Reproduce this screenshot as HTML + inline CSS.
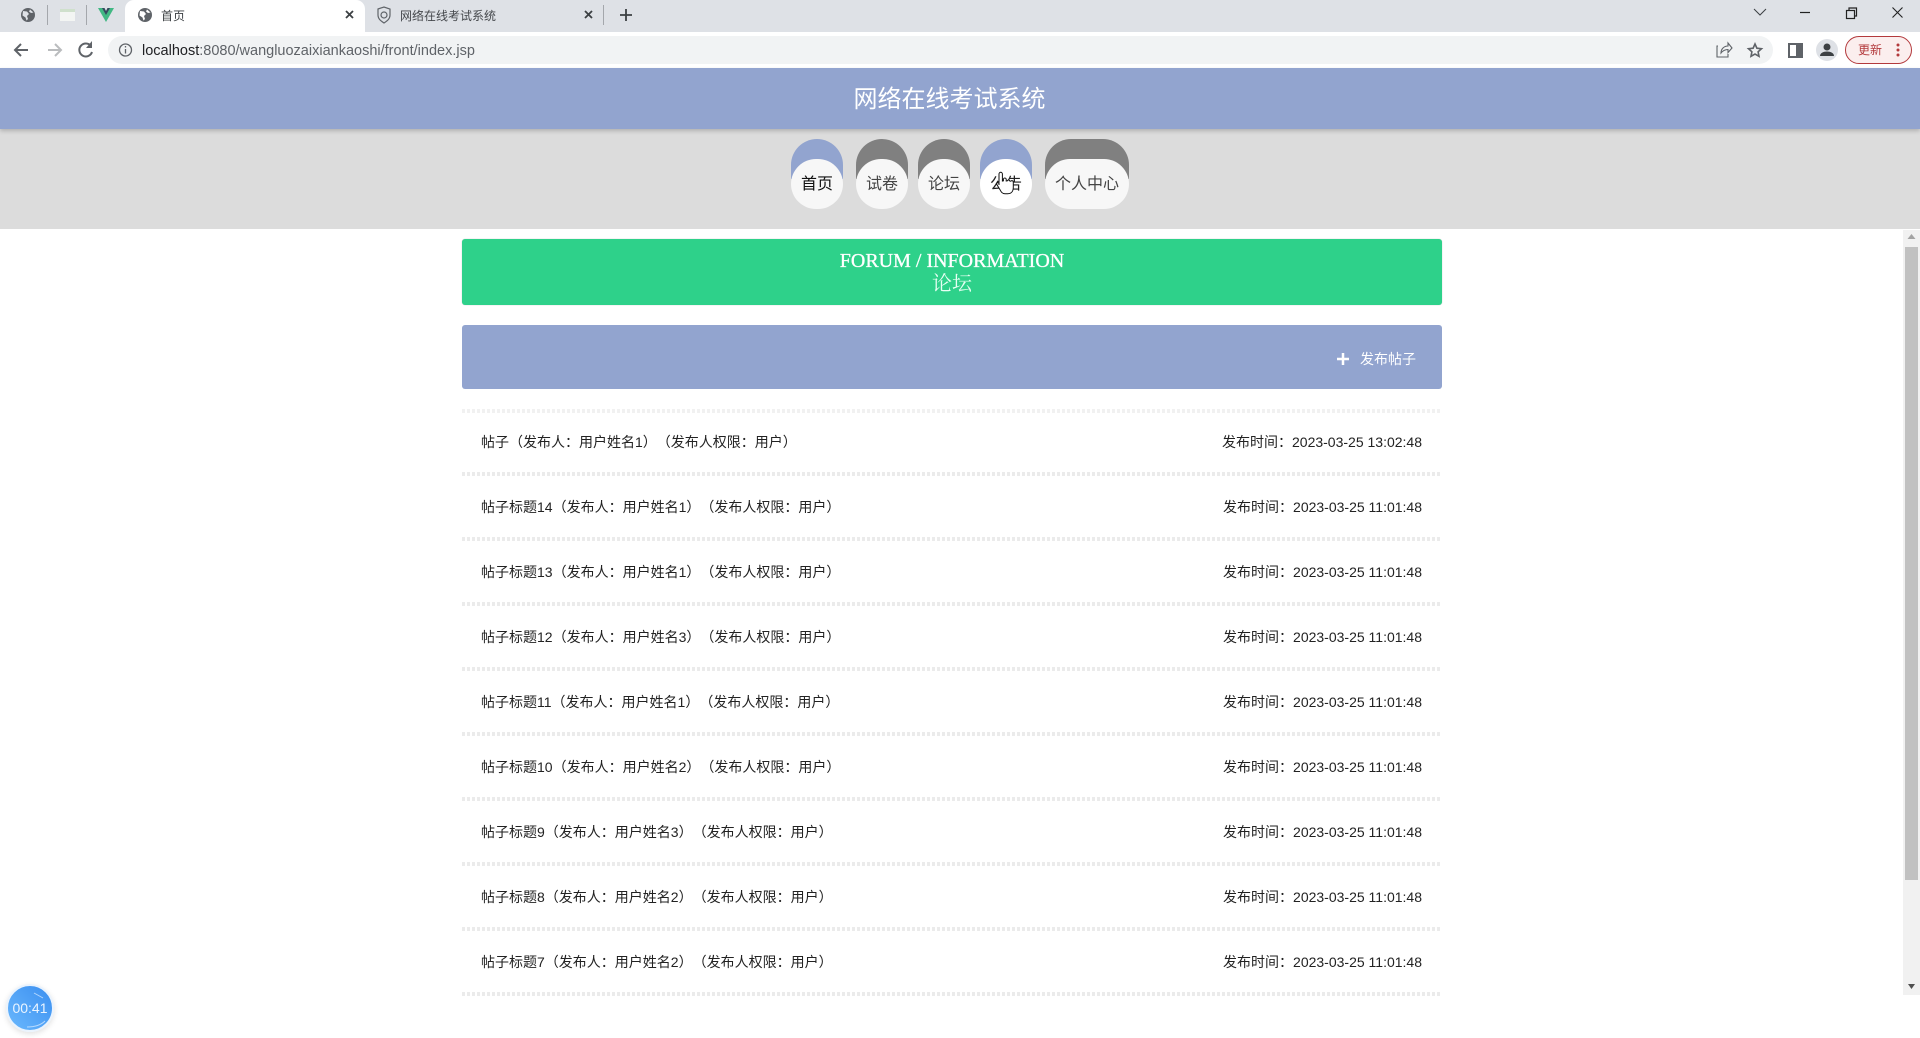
<!DOCTYPE html>
<html lang="zh"><head><meta charset="utf-8"><title>首页</title>
<style>
html,body{margin:0;padding:0;width:1920px;height:1038px;overflow:hidden;background:#fff;font-family:"Liberation Sans","Noto Sans CJK SC",sans-serif;color:#202124;text-spacing-trim:space-all}
.a{position:absolute;white-space:nowrap}
svg{position:absolute;overflow:visible}
.nt{position:absolute;top:139px;height:40px;border-radius:26px 26px 0 0}
.nb{position:absolute;top:159px;height:50px;border-radius:25px;background:#f7f7f7;text-align:center;line-height:52px;font-size:16px;color:#444}
.dash{position:absolute;left:462px;width:980px;height:4px;background:repeating-linear-gradient(90deg,#ebebeb 0 3px,#fff 3px 5px)}
.l,.r{position:absolute;font-size:14px;line-height:20px;color:#222;white-space:nowrap}
.l{left:481px}.r{right:498px}
</style></head><body>
<!-- tab strip -->
<div class="a" style="left:0;top:0;width:1920px;height:32px;background:#dee1e6"></div>
<div class="a" style="left:125px;top:0;width:240px;height:32px;background:#fff;border-radius:9px 9px 0 0"></div>
<svg style="left:0;top:0" width="700" height="32">
<circle cx="28" cy="15" r="7" fill="#5f6368"/><path d="M23 11l4 .5 2 2.500-2 2 1 3-1.500 1.500-1-3-3-2zM30 9.500l-1 2 2 1.500 2.500-.5" fill="#dee1e6"/>
<path d="M47.5 5v20M86.5 5v20M603.500 5v20" stroke="#a4a7ac" stroke-width="1"/>
<rect x="60" y="9" width="15" height="12" fill="#f3f5f3"/><rect x="60" y="9" width="15" height="3" fill="#cfe0cc"/>
<path d="M98 8h5l3 6 3-6h5l-8 14z" fill="#41b883"/><path d="M102 8h2.500l1.500 3 1.500-3h2.500l-4 7z" fill="#35495e"/>
<circle cx="145" cy="15" r="7" fill="#5f6368"/><path d="M140 11l4 .5 2 2.500-2 2 1 3-1.500 1.500-1-3-3-2zM147 9.500l-1 2 2 1.500 2.500-.5" fill="#fff"/>
<path d="M346 11l7 7M353 11l-7 7M585 11l7 7M592 11l-7 7" stroke="#3c4043" stroke-width="1.800"/>
<path d="M378 9l6-2 6 2v6c0 4-3 6-6 8-3-2-6-4-6-8z" fill="none" stroke="#5f6368" stroke-width="1.200"/><circle cx="384" cy="15" r="3" fill="none" stroke="#5f6368" stroke-width="1.200"/>
<path d="M626 9v12M620 15h12" stroke="#3c4043" stroke-width="1.800"/>
</svg>
<div class="a" style="left:161px;top:7px;font-size:12px;line-height:18px;color:#3c4043">首页</div>
<div class="a" style="left:400px;top:7px;font-size:12px;line-height:18px;color:#45484c">网络在线考试系统</div>
<svg style="left:1600px;top:0" width="320" height="32">
<path d="M154 9l6 6 6-6" fill="none" stroke="#3c4043" stroke-width="1"/>
<path d="M200 12.500h10" stroke="#222" stroke-width="1.200"/>
<rect x="246.500" y="10.500" width="8" height="8" fill="none" stroke="#222" stroke-width="1.200"/><path d="M249 10V8h7.500v8h-2" fill="none" stroke="#222" stroke-width="1.200"/>
<path d="M292.500 7.500l10 10M302.500 7.500l-10 10" stroke="#222" stroke-width="1.100"/>
</svg>
<!-- toolbar -->
<div class="a" style="left:0;top:32px;width:1920px;height:36px;background:#fff"></div>
<div class="a" style="left:108px;top:36px;width:1665px;height:28px;border-radius:14px;background:#f1f3f4"></div>
<svg style="left:0;top:32px" width="200" height="36">
<path d="M28 18H16M21 12l-6 6 6 6" fill="none" stroke="#5f6368" stroke-width="2"/>
<path d="M48 18h12M55 12l6 6-6 6" fill="none" stroke="#babcbe" stroke-width="2"/>
<path d="M91 14a6.500 6.500 0 1 0 1 6" fill="none" stroke="#5f6368" stroke-width="2"/><path d="M92 9v7h-6z" fill="#5f6368"/>
<circle cx="125.500" cy="18" r="6" fill="none" stroke="#5f6368" stroke-width="1.300"/><path d="M125.500 17v4.500M125.500 14v1.500" stroke="#5f6368" stroke-width="1.300"/>
</svg>
<div class="a" style="left:142px;top:41px;font-size:14.500px;line-height:20px;color:#5f6368"><span style="color:#202124">localhost</span>:8080/wangluozaixiankaoshi/front/index.jsp</div>
<svg style="left:1600px;top:32px" width="320" height="36">
<path d="M118 14h-1v11h11v-3" fill="none" stroke="#5f6368" stroke-width="1.100"/><path d="M121 21c0-4 3-7 7-7v-3l4 5-4 4.500v-3c-3 0-5 1-7 3.500z" fill="none" stroke="#5f6368" stroke-width="1.100"/>
<path d="M155 12l1.900 4.200 4.600.5-3.400 3.100.9 4.500-4-2.300-4 2.300.9-4.500-3.400-3.100 4.600-.5z" fill="none" stroke="#5f6368" stroke-width="1.600"/>
<rect x="189" y="12" width="13" height="13" fill="#fff" stroke="#5f6368" stroke-width="2"/><rect x="196" y="12" width="7" height="14" fill="#5f6368"/>
<circle cx="227" cy="18" r="11" fill="#dee1e6"/><circle cx="227" cy="15" r="3.500" fill="#3c4043"/><path d="M220 24c0-6 14-6 14 0z" fill="#3c4043"/>
<rect x="245.500" y="4.500" width="66" height="27" rx="13.500" fill="#fbeeee" stroke="#b3393c" stroke-width="1"/>
<circle cx="298" cy="13" r="1.500" fill="#b3393c"/><circle cx="298" cy="18" r="1.500" fill="#b3393c"/><circle cx="298" cy="23" r="1.500" fill="#b3393c"/>
</svg>
<div class="a" style="left:1858px;top:41px;font-size:12px;line-height:18px;color:#b3393c">更新</div>
<!-- header -->
<div class="a" style="left:0;top:68px;width:1920px;height:61px;background:#92a4cf;box-shadow:0 2px 4px rgba(0,0,0,.2);z-index:2"></div>
<div class="a" style="left:0;top:68px;width:1899px;z-index:3;text-align:center;line-height:63px;font-size:24px;color:#fff">网络在线考试系统</div>
<div class="a" style="left:0;top:129px;width:1920px;height:100px;background:#dcdcdc"></div>
<div class="nt" style="left:791px;width:52px;background:#92a4cf"></div><div class="nb" style="left:791px;width:52px;color:#111">首页</div>
<div class="nt" style="left:856px;width:52px;background:#808080"></div><div class="nb" style="left:856px;width:52px">试卷</div>
<div class="nt" style="left:918px;width:52px;background:#808080"></div><div class="nb" style="left:918px;width:52px">论坛</div>
<div class="nt" style="left:980px;width:52px;background:#92a4cf"></div><div class="nb" style="left:980px;width:52px;background:#fff;color:#222">公告</div>
<div class="nt" style="left:1045px;width:84px;background:#808080"></div><div class="nb" style="left:1045px;width:84px">个人中心</div>
<svg style="left:995px;top:170px" width="20" height="26"><path d="M4 15V4a1.700 1.700 0 0 1 3.400 0v7l1-.2V9a1.500 1.500 0 0 1 2.800 0v2l1-.1a1.400 1.400 0 0 1 2.700.2l.900.1a1.400 1.400 0 0 1 2.500 1v5c0 4-2 6.500-5.500 6.500H10c-3 0-4-2-5-4l-3-5c-1-2 1-3 2-1z" fill="#fff" stroke="#111" stroke-width="1"/></svg>
<!-- banner -->
<div class="a" style="left:462px;top:239px;width:980px;height:66px;background:#2ed18a;border-radius:3px;box-shadow:0 0 1px #bbb"></div>
<div class="a" style="left:462px;top:250px;width:980px;text-align:center;font-family:'Liberation Serif','Noto Serif CJK SC',serif;font-size:20px;line-height:22px;color:#fff;-webkit-text-stroke:.3px #fff">FORUM / INFORMATION</div>
<div class="a" style="left:462px;top:273px;width:980px;text-align:center;font-family:'Liberation Serif','Noto Serif CJK SC',serif;font-size:20px;line-height:22px;color:#e8fff4">论坛</div>
<div class="a" style="left:462px;top:325px;width:980px;height:64px;background:#92a4cf;border-radius:3px"></div>
<svg style="left:1336px;top:352px" width="14" height="14"><path d="M7 1v12M1 7h12" stroke="#fff" stroke-width="2.500"/></svg>
<div class="a" style="left:1360px;top:349px;font-size:14px;line-height:20px;color:#fff">发布帖子</div>
<!-- list -->
<div class="dash" style="top:409px;opacity:.7"></div><div class="dash" style="top:472px"></div><div class="dash" style="top:537px"></div><div class="dash" style="top:602px"></div><div class="dash" style="top:667px"></div><div class="dash" style="top:732px"></div><div class="dash" style="top:797px"></div><div class="dash" style="top:862px"></div><div class="dash" style="top:927px"></div><div class="dash" style="top:992px"></div>
<div class="l" style="top:432px">帖子（发布人：用户姓名1）（发布人权限：用户）</div><div class="r" style="top:432px">发布时间：2023-03-25 13:02:48</div>
<div class="l" style="top:497px">帖子标题14（发布人：用户姓名1）（发布人权限：用户）</div><div class="r" style="top:497px">发布时间：2023-03-25 11:01:48</div>
<div class="l" style="top:562px">帖子标题13（发布人：用户姓名1）（发布人权限：用户）</div><div class="r" style="top:562px">发布时间：2023-03-25 11:01:48</div>
<div class="l" style="top:627px">帖子标题12（发布人：用户姓名3）（发布人权限：用户）</div><div class="r" style="top:627px">发布时间：2023-03-25 11:01:48</div>
<div class="l" style="top:692px">帖子标题11（发布人：用户姓名1）（发布人权限：用户）</div><div class="r" style="top:692px">发布时间：2023-03-25 11:01:48</div>
<div class="l" style="top:757px">帖子标题10（发布人：用户姓名2）（发布人权限：用户）</div><div class="r" style="top:757px">发布时间：2023-03-25 11:01:48</div>
<div class="l" style="top:822px">帖子标题9（发布人：用户姓名3）（发布人权限：用户）</div><div class="r" style="top:822px">发布时间：2023-03-25 11:01:48</div>
<div class="l" style="top:887px">帖子标题8（发布人：用户姓名2）（发布人权限：用户）</div><div class="r" style="top:887px">发布时间：2023-03-25 11:01:48</div>
<div class="l" style="top:952px">帖子标题7（发布人：用户姓名2）（发布人权限：用户）</div><div class="r" style="top:952px">发布时间：2023-03-25 11:01:48</div>
<!-- scrollbar -->
<div class="a" style="left:1903px;top:230px;width:17px;height:765px;background:#f1f1f1"></div>
<div class="a" style="left:1905px;top:247px;width:13px;height:633px;background:#c1c1c1"></div>
<svg style="left:1903px;top:230px" width="17" height="765"><path d="M8.500 4l4 5h-8z" fill="#a3a3a3"/><path d="M5 754h7l-3.500 5z" fill="#505050"/></svg>
<!-- timer -->
<div class="a" style="left:6px;top:984px;width:48px;height:48px;border-radius:50%;background:linear-gradient(45deg,#6ab8fd,#3b8ff0);border:2px solid #eaf3fd;box-sizing:border-box;box-shadow:0 2px 6px rgba(0,0,0,.12);text-align:center;line-height:45px;font-size:14px;color:#eaf4ff">00:41</div>
<svg style="left:6px;top:984px" width="48" height="48"><path d="M28 9l9 5M21 43c7 0 14-2 18-6" fill="none" stroke="#cfe6ff" stroke-width="1" opacity=".8"/></svg>
</body></html>
